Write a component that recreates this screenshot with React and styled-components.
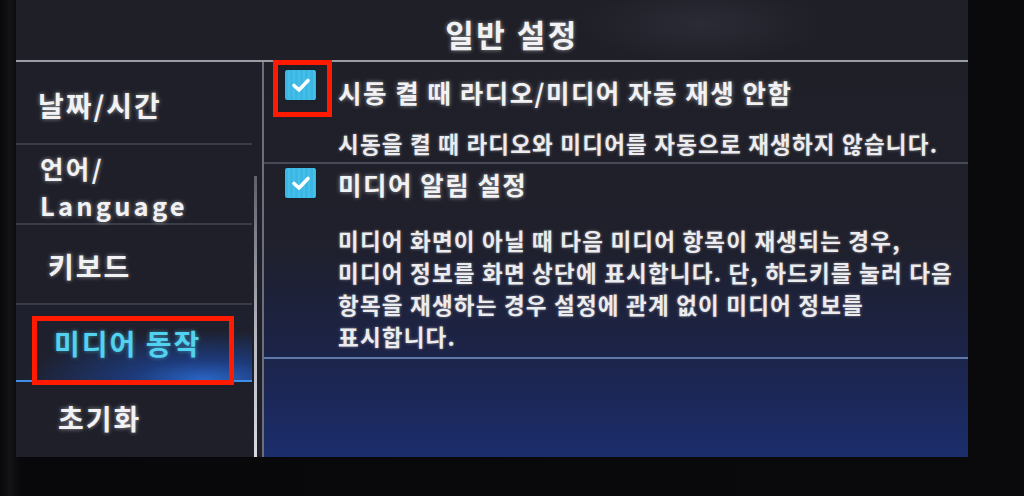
import React from "react";
import styled, { createGlobalStyle } from "styled-components";

const GlobalStyle = createGlobalStyle`
  html, body {
    margin: 0;
    padding: 0;
    background: #0a0a0d;
  }
  body {
    width: 1024px;
    height: 496px;
    overflow: hidden;
    font-family: "Noto Sans CJK KR", "Noto Sans", sans-serif;
  }
`;

const Page = styled.div`
  position: relative;
  width: 1024px;
  height: 496px;
  padding-left: 16px;
  box-sizing: border-box;
  background: linear-gradient(90deg, #08080a 0%, #141418 1%, #08080a 2%, #0a0a0d 100%);
`;

const Screen = styled.div`
  width: 952px;
  height: 457px;
  display: flex;
  flex-direction: column;
  background: #1d1e27;
  color: #f2f2f4;
`;

const TitleBar = styled.div`
  height: 62px;
  flex: none;
  display: flex;
  align-items: center;
  justify-content: center;
  padding: 6px 0 0 40px;
  box-sizing: border-box;
  border-bottom: 2px solid #9a9ca6;
  background: radial-gradient(ellipse 120px 40px at 72% 40%, #2a2b34 0%, #1e1f27 100%);
  font-size: 31px;
  font-weight: 700;
  letter-spacing: 2.5px;
  text-shadow: 0 0 4px rgba(255, 255, 255, 0.55);
`;

const Body = styled.div`
  flex: 1;
  display: flex;
  min-height: 0;
`;

const Menu = styled.div`
  width: 236px;
  flex: none;
  display: flex;
  flex-direction: column;
  background: #1e1f28;
`;

const MenuItem = styled.div`
  height: ${(p) => p.h}px;
  flex: none;
  display: flex;
  flex-direction: column;
  justify-content: center;
  box-sizing: border-box;
  padding-left: ${(p) => p.indent}px;
  padding-top: ${(p) => p.shift}px;
  border-bottom: 2px solid ${(p) => (p.active ? "#3f8de6" : "#3a3c47")};
  font-size: 28px;
  font-weight: 700;
  line-height: 38px;
  letter-spacing: 2px;
  color: ${(p) => (p.active ? "#52d2f0" : "#f2f2f4")};
  text-shadow: ${(p) =>
    p.active ? "0 0 4px rgba(80, 210, 240, 0.6)" : "0 0 4px rgba(255, 255, 255, 0.55)"};
  background: ${(p) =>
    p.active
      ? "radial-gradient(ellipse 180px 50px at 80% 100%, #2a66c8 0%, #1d3a7a 40%, #1e202d 100%)"
      : "transparent"};
  &:last-child {
    border-bottom: none;
  }
`;

// two-line labels use a slightly smaller face so the lines sit close together
const MenuLine = styled.span`
  display: block;
  font-size: 25.5px;
  line-height: 37px;
  letter-spacing: ${(p) => (p.latin ? 3.2 : 2.4)}px;
`;

const ScrollTrack = styled.div`
  width: 10px;
  flex: none;
  display: flex;
  flex-direction: column;
  padding-top: 114px;
  box-sizing: border-box;
  background: #1e1f28;
`;

const ScrollThumb = styled.div`
  width: 3px;
  flex: 1;
  margin-left: 2px;
  background: linear-gradient(180deg, #5d606b 0%, #b8bbc4 60%, #d8dae0 100%);
`;

const Content = styled.div`
  flex: 1;
  display: flex;
  flex-direction: column;
  border-left: 2px solid #6c6f7a;
  background: linear-gradient(180deg, #1e1f27 0%, #1f202b 45%, #1c2346 72%, #1b2d6c 100%);
`;

const Option = styled.div`
  display: grid;
  grid-template-columns: 31px 1fr;
  column-gap: 22px;
  padding: ${(p) => p.pad};
  padding-left: 21px;
  border-bottom: 2px solid ${(p) => p.line};
`;

const Check = styled.div`
  width: 31px;
  height: 30px;
  border-radius: 2px;
  display: flex;
  align-items: center;
  justify-content: center;
  background: repeating-linear-gradient(90deg, #3cb6e2 0px, #3cb6e2 3px, #44bfe9 3px, #44bfe9 5px);
  box-shadow: 0 0 0 1px #16202c;
`;

const OptionTitle = styled.div`
  font-size: 25.5px;
  font-weight: 700;
  line-height: 32px;
  padding-top: ${(p) => p.top}px;
  letter-spacing: 1.5px;
  white-space: nowrap;
  text-shadow: 0 0 4px rgba(255, 255, 255, 0.55);
`;

const OptionText = styled.div`
  grid-column: 2;
  font-size: 22.5px;
  font-weight: 700;
  line-height: ${(p) => p.lh}px;
  margin-top: ${(p) => p.top}px;
  letter-spacing: 1.2px;
  white-space: nowrap;
  color: #ececef;
  text-shadow: 0 0 3px rgba(255, 255, 255, 0.45);
`;

const Filler = styled.div`
  flex: 1;
`;

const Mark = styled.div`
  position: absolute;
  left: ${(p) => p.x}px;
  top: ${(p) => p.y}px;
  width: ${(p) => p.w}px;
  height: ${(p) => p.h}px;
  box-sizing: border-box;
  border: 5px solid #ff1a00;
  pointer-events: none;
`;

const CheckIcon = () => (
  <svg width="20" height="16" viewBox="0 0 20 16">
    <polyline
      points="3,8.5 8,13 17,3.5"
      fill="none"
      stroke="#ffffff"
      strokeWidth="3.6"
      strokeLinecap="round"
      strokeLinejoin="round"
    />
  </svg>
);

const menu = [
  { label: "날짜/시간", h: 83, indent: 22, shift: 4 },
  {
    label: [
      <MenuLine key="a">언어/</MenuLine>,
      <MenuLine key="b" latin>
        Language
      </MenuLine>,
    ],
    h: 80,
    indent: 24,
    shift: 4,
  },
  { label: "키보드", h: 80, indent: 32, shift: 4 },
  { label: "미디어 동작", h: 77, indent: 38, shift: 0, active: true },
  { label: "초기화", h: 72, indent: 42, shift: 0 },
];

export default function App() {
  return (
    <>
      <GlobalStyle />
      <Page>
        <Screen>
          <TitleBar>일반 설정</TitleBar>
          <Body>
            <Menu>
              {menu.map((m, i) => (
                <MenuItem key={i} h={m.h} indent={m.indent} shift={m.shift} active={m.active}>
                  {typeof m.label === "string" ? <span>{m.label}</span> : m.label}
                </MenuItem>
              ))}
            </Menu>
            <ScrollTrack>
              <ScrollThumb />
            </ScrollTrack>
            <Content>
              <Option pad="8px 0 5px" line="#474a56">
                <Check>
                  <CheckIcon />
                </Check>
                <OptionTitle top={6}>시동 켤 때 라디오/미디어 자동 재생 안함</OptionTitle>
                <OptionText top={21} lh={28}>
                  시동을 켤 때 라디오와 미디어를 자동으로 재생하지 않습니다.
                </OptionText>
              </Option>
              <Option pad="4px 0 5px" line="#5f79aa">
                <Check>
                  <CheckIcon />
                </Check>
                <OptionTitle top={0}>미디어 알림 설정</OptionTitle>
                <OptionText top={24} lh={32}>
                  미디어 화면이 아닐 때 다음 미디어 항목이 재생되는 경우,
                  <br />
                  미디어 정보를 화면 상단에 표시합니다. 단, 하드키를 눌러 다음
                  <br />
                  항목을 재생하는 경우 설정에 관계 없이 미디어 정보를
                  <br />
                  표시합니다.
                </OptionText>
              </Option>
              <Filler />
            </Content>
          </Body>
        </Screen>
        <Mark x={273} y={60} w={59} h={57} />
        <Mark x={32} y={316} w={202} h={69} />
      </Page>
    </>
  );
}
